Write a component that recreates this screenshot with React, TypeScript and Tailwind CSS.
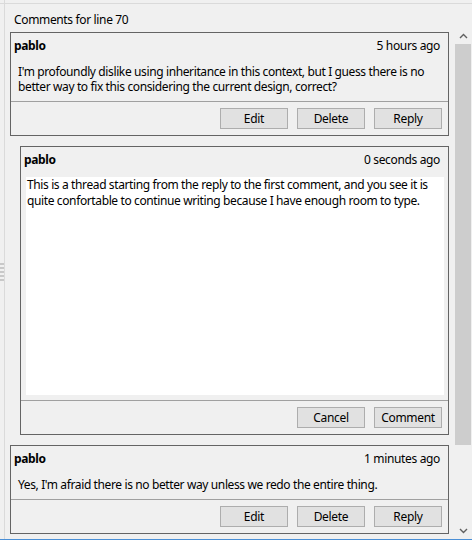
import React from "react";

const FONT = { fontFamily: '"Noto Sans", "Open Sans", sans-serif' };

interface CommentProps {
  author: string;
  time: string;
  lines: string[];
}

const WinButton: React.FC<{ label: string }> = ({ label }) => (
  <button className="w-[68px] h-[21px] bg-[#e1e1e1] border border-[#adadad] text-[12px] leading-[19px] tracking-[-0.3px] text-black">
    {label}
  </button>
);

const ButtonBar: React.FC<{ labels: string[] }> = ({ labels }) => (
  <div className="border-t border-[#a0a0a0] flex justify-end gap-[9px] pt-[6px] pb-[6px] pr-[6px]">
    {labels.map((l) => (
      <WinButton key={l} label={l} />
    ))}
  </div>
);

const Header: React.FC<{ author: string; time: string }> = ({ author, time }) => (
  <div className="flex justify-between pt-[5px] pl-[3px] pr-[8px] leading-[16px] text-[12px] tracking-[-0.35px]">
    <span className="font-bold">{author}</span>
    <span>{time}</span>
  </div>
);

const CommentBox: React.FC<CommentProps> = ({ author, time, lines }) => (
  <div className="w-[439px] border border-[#646464]">
    <Header author={author} time={time} />
    <div className="mt-[10px] pl-[7px] pb-[7px] text-[12px] leading-[15px] tracking-[-0.38px] whitespace-nowrap">
      {lines.map((l, i) => (
        <div key={i}>{l}</div>
      ))}
    </div>
    <ButtonBar labels={["Edit", "Delete", "Reply"]} />
  </div>
);

const ReplyEditor: React.FC = () => (
  <div className="ml-[10px] w-[429px] border border-[#646464]">
    <Header author="pablo" time="0 seconds ago" />
    <div className="mt-[9px] ml-[5px] mr-[4px] mb-[5px] h-[218px] bg-white pl-[1px] text-[12px] leading-[15.5px] tracking-[-0.38px] whitespace-nowrap">
      <div>This is a thread starting from the reply to the first comment, and you see it is</div>
      <div>quite confortable to continue writing because I have enough room to type.</div>
    </div>
    <ButtonBar labels={["Cancel", "Comment"]} />
  </div>
);

const Chevron: React.FC<{ up?: boolean }> = ({ up }) => (
  <svg width="9" height="6" viewBox="0 0 9 6">
    <path
      d={up ? "M1 5 L4.5 1.5 L8 5" : "M1 1 L4.5 4.5 L8 1"}
      fill="none"
      stroke="#606060"
      strokeWidth="1.4"
    />
  </svg>
);

export default function App() {
  return (
    <div
      className="w-[472px] h-[540px] bg-[#f0f0f0] text-black flex flex-col overflow-hidden"
      style={FONT}
    >
      <div className="h-[3px] flex">
        <div className="w-[4px] border-r border-[#dadada] box-content" />
      </div>
      <div className="flex-1 flex border-t border-[#dadada] min-h-0">
        <div className="w-[4px] flex flex-col justify-center gap-[2px]">
          {[0, 1, 2, 3, 4].map((i) => (
            <div key={i} className="h-[2px] bg-[#c8c8c8]" />
          ))}
        </div>
        <div className="flex-1 border-l border-[#dadada] flex flex-col min-w-0">
          <div className="h-[23px] pl-[9px] pt-[8px] text-[12px] leading-[15px] tracking-[-0.35px]">
            Comments for line 70
          </div>
          <div className="flex-1 flex min-h-0">
            <div className="pl-[5px] flex flex-col">
              <div className="mt-[5px]">
                <CommentBox
                  author="pablo"
                  time="5 hours ago"
                  lines={[
                    "I'm profoundly dislike using inheritance in this context, but I guess there is no",
                    "better way to fix this considering the current design, correct?",
                  ]}
                />
              </div>
              <div className="mt-[10px]">
                <ReplyEditor />
              </div>
              <div className="mt-[10px]">
                <CommentBox
                  author="pablo"
                  time="1 minutes ago"
                  lines={["Yes, I'm afraid there is no better way unless we redo the entire thing."]}
                />
              </div>
            </div>
            <div className="ml-[5px] w-[18px] px-[1px] flex flex-col">
              <div className="h-[17px] flex items-center justify-center">
                <Chevron up />
              </div>
              <div className="flex-1 flex flex-col">
                <div className="h-[401px] bg-[#cdcdcd]" />
              </div>
              <div className="h-[17px] flex items-center justify-center">
                <Chevron />
              </div>
            </div>
          </div>
        </div>
      </div>
      <div className="h-[1px] bg-[#4a8fd6]" />
    </div>
  );
}
